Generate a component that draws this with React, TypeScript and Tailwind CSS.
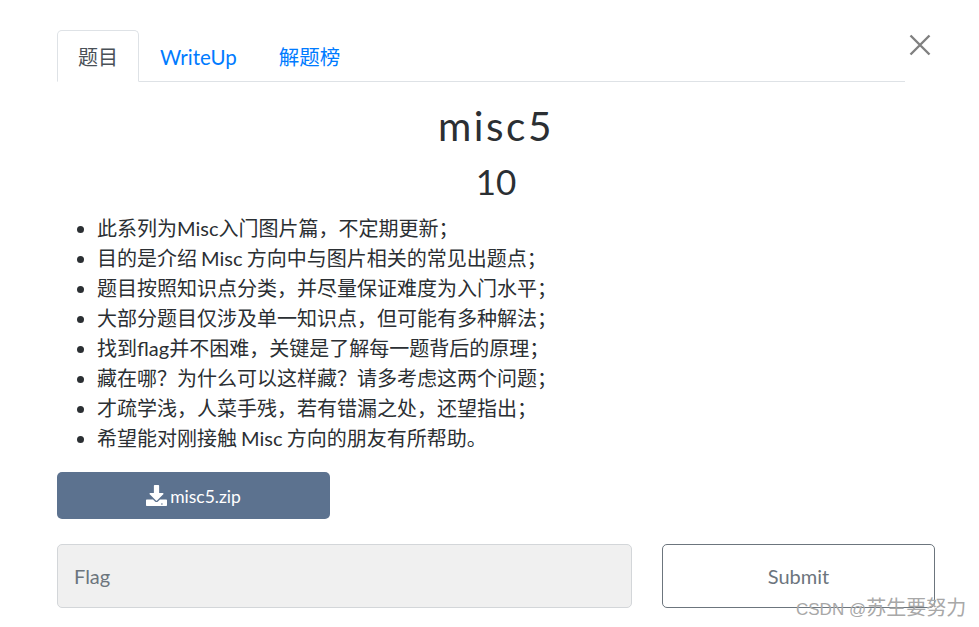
import React from "react";

const FONT = "font-['Lato','Noto_Sans_CJK_SC',sans-serif]";

const items = [
  "此系列为Misc入门图片篇，不定期更新；",
  "目的是介绍 Misc 方向中与图片相关的常见出题点；",
  "题目按照知识点分类，并尽量保证难度为入门水平；",
  "大部分题目仅涉及单一知识点，但可能有多种解法；",
  "找到flag并不困难，关键是了解每一题背后的原理；",
  "藏在哪？为什么可以这样藏？请多考虑这两个问题；",
  "才疏学浅，人菜手残，若有错漏之处，还望指出；",
  "希望能对刚接触 Misc 方向的朋友有所帮助。",
];

export default function App() {
  return (
    <div className={`relative h-[627px] w-[979px] overflow-hidden bg-white pl-[57px] pr-[44px] pt-[30px] text-[#212529] ${FONT}`}>
      <button className="absolute left-[908px] top-[33px] h-6 w-6 text-[#808080]" aria-label="Close">
        <svg viewBox="0 0 24 24" className="h-6 w-6" fill="none" stroke="currentColor" strokeWidth="2.4">
          <path d="M2.500 2.500 21.500 21.500M21.500 2.500 2.500 21.500" />
        </svg>
      </button>

      <div className="flex h-[52px] w-[848px] border-b border-[#dee2e6] text-[20.500px] leading-[30px]">
        <div className="h-[52px] w-[82px] rounded-t-[5px] border border-[#dee2e6] border-b-white bg-white pt-[11px] text-center text-[20px] text-[#495057]">题目</div>
        <div className="h-[52px] border border-transparent px-5 pt-[11px] text-[#007bff]">WriteUp</div>
        <div className="h-[52px] border border-transparent px-5 pt-[11px] text-[#007bff]">解题榜</div>
      </div>

      <h1 className="mt-[18px] text-center text-[40.500px] font-normal leading-[52px] tracking-[2.500px] text-[#2b2f33]">misc5</h1>
      <h3 className="mt-[3px] text-center text-[35px] font-normal leading-[52px] text-[#2b2f33]">10</h3>

      <ul className="mt-[6px] list-disc pl-10 text-[20px] leading-[30px] text-[#2b2f33] [word-spacing:-1px]">
        {items.map((t) => (
          <li key={t}>{t}</li>
        ))}
      </ul>

      <button className="mt-[19px] flex h-[47px] w-[273px] items-center justify-center gap-[3px] rounded-[5px] bg-[#5c728f] pt-[3px] text-[17.500px] text-white">
        <svg viewBox="0 0 512 512" className="mb-[3px] h-[21px] w-[21px]" fill="currentColor">
          <path d="M216 0h80c13.300 0 24 10.700 24 24v168h87.700c17.800 0 26.700 21.500 14.100 34.100L269.700 378.300c-7.500 7.500-19.800 7.500-27.300 0L90.100 226.100c-12.600-12.600-3.700-34.100 14.100-34.100H192V24c0-13.300 10.700-24 24-24zm296 376v112c0 13.300-10.700 24-24 24H24c-13.300 0-24-10.700-24-24V376c0-13.300 10.700-24 24-24h146.700l49 49c20.100 20.100 52.500 20.100 72.600 0l49-49H488c13.300 0 24 10.700 24 24zm-104 88c0-11-9-20-20-20s-20 9-20 20 9 20 20 20 20-9 20-20z" />
        </svg>
        misc5.zip
      </button>

      <div className="mt-[25px] flex gap-[30px]">
        <div className="flex h-[64px] w-[575px] items-center rounded-[5px] border border-[#d3d6d9] bg-[#f0f0f0] pl-4 text-[20px] text-[#6c757d]">Flag</div>
        <button className="h-[64px] w-[273px] rounded-[5px] border border-[#6c757d] bg-white text-[20px] text-[#6c757d]">Submit</button>
      </div>

      <div className="absolute left-[796px] top-[596px] flex items-baseline font-['Liberation_Sans','Noto_Sans_CJK_SC',sans-serif] text-[17px] leading-6 text-[#a8a8a8]">
        <span>CSDN @</span>
        <span className="text-[20px]">苏生要努力</span>
      </div>
    </div>
  );
}
